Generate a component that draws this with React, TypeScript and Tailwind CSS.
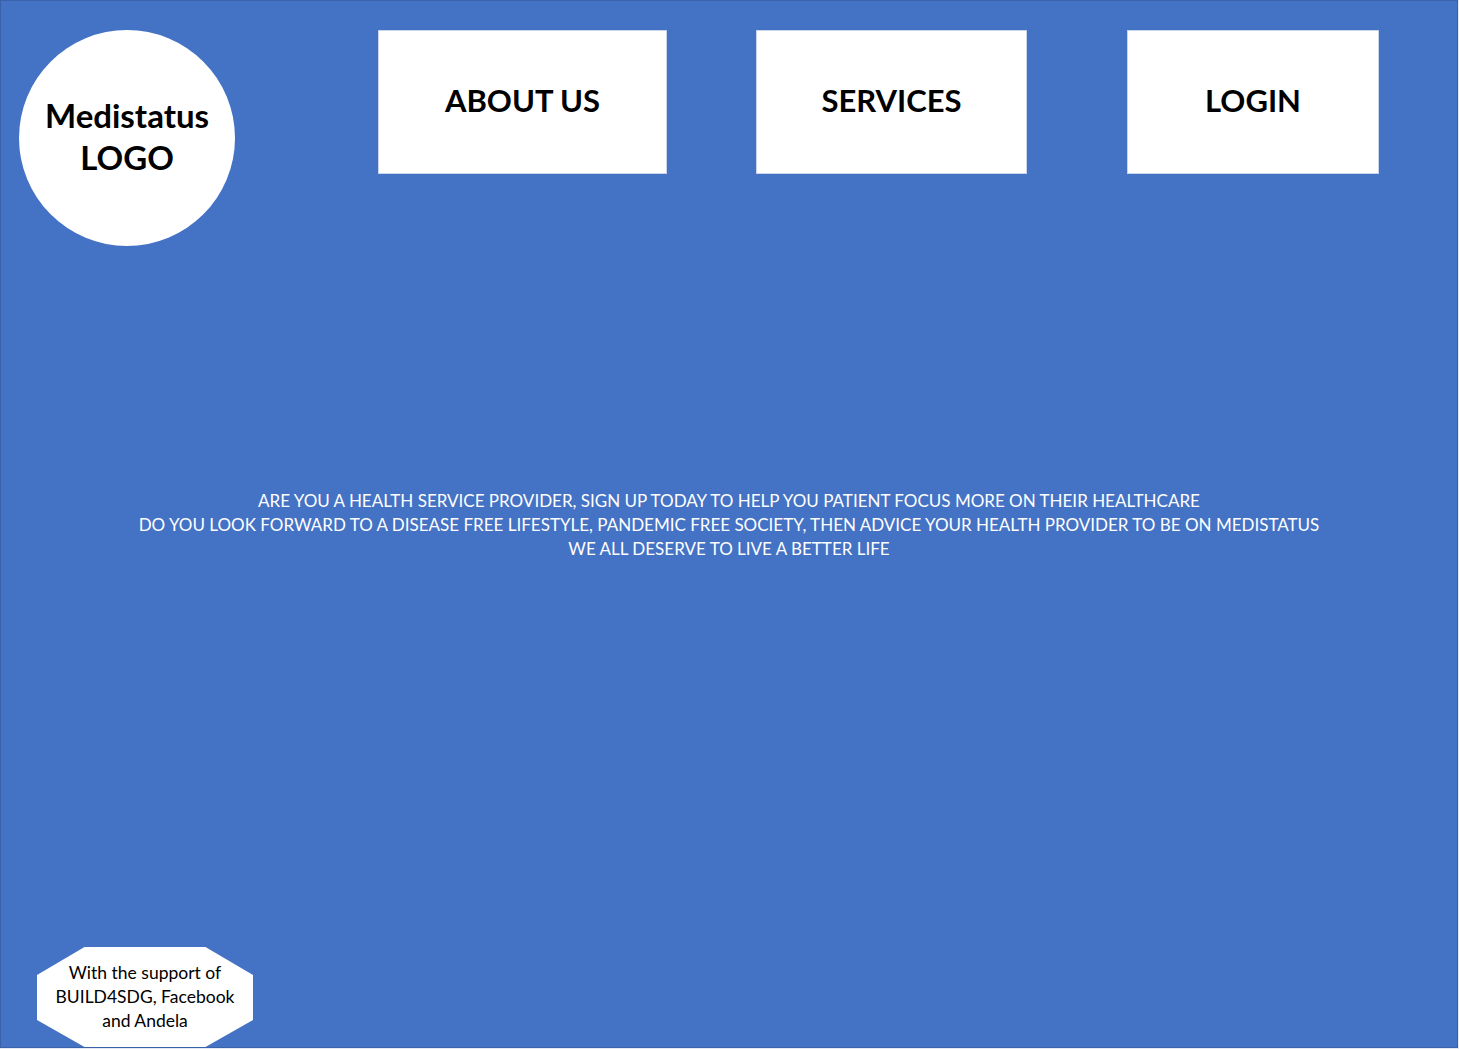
import React from "react";

export default function App() {
  const font = { fontFamily: "Lato, 'Open Sans', sans-serif" };
  return (
    <div className="w-[1459px] h-[1049px] bg-[#e3e8f2]" style={font}>
      <div className="w-[1458px] h-[1048px] bg-[#4472c4] border border-[#3a62a8] flex flex-col">
        <header className="flex items-start pt-[29px] pl-[18px]">
          <div className="w-[216px] h-[216px] rounded-full bg-white flex flex-col items-center justify-center text-black font-bold text-[33px] leading-[42px] pb-[4px]">
            <span>Medistatus</span>
            <span>LOGO</span>
          </div>
          <div className="ml-[143px] w-[289px] h-[144px] bg-white border border-[#c9d4ea] flex items-center justify-center text-black font-bold text-[31px] pb-[3px]">
            ABOUT US
          </div>
          <div className="ml-[89px] w-[271px] h-[144px] bg-white border border-[#c9d4ea] flex items-center justify-center text-black font-bold text-[31px] pb-[3px]">
            SERVICES
          </div>
          <div className="ml-[100px] w-[252px] h-[144px] bg-white border border-[#c9d4ea] flex items-center justify-center text-black font-bold text-[31px] pb-[3px]">
            LOGIN
          </div>
        </header>
        <main className="mt-[243px] flex flex-col items-center text-white text-[17px] leading-[24px]">
          <p>ARE YOU A HEALTH SERVICE PROVIDER, SIGN UP TODAY TO HELP YOU PATIENT FOCUS MORE ON THEIR HEALTHCARE</p>
          <p>DO YOU LOOK FORWARD TO A DISEASE FREE LIFESTYLE, PANDEMIC FREE SOCIETY, THEN ADVICE YOUR HEALTH PROVIDER TO BE ON MEDISTATUS</p>
          <p>WE ALL DESERVE TO LIVE A BETTER LIFE</p>
        </main>
        <footer className="mt-auto pl-[36px]">
          <div
            className="w-[216px] h-[100px] bg-white flex flex-col items-center justify-center text-black text-[17.5px] leading-[24px] text-center"
            style={{ clipPath: "polygon(22% 0, 78% 0, 100% 28%, 100% 73%, 78% 100%, 22% 100%, 0 73%, 0 28%)" }}
          >
            <span>With the support of</span>
            <span>BUILD4SDG, Facebook</span>
            <span>and Andela</span>
          </div>
        </footer>
      </div>
    </div>
  );
}
